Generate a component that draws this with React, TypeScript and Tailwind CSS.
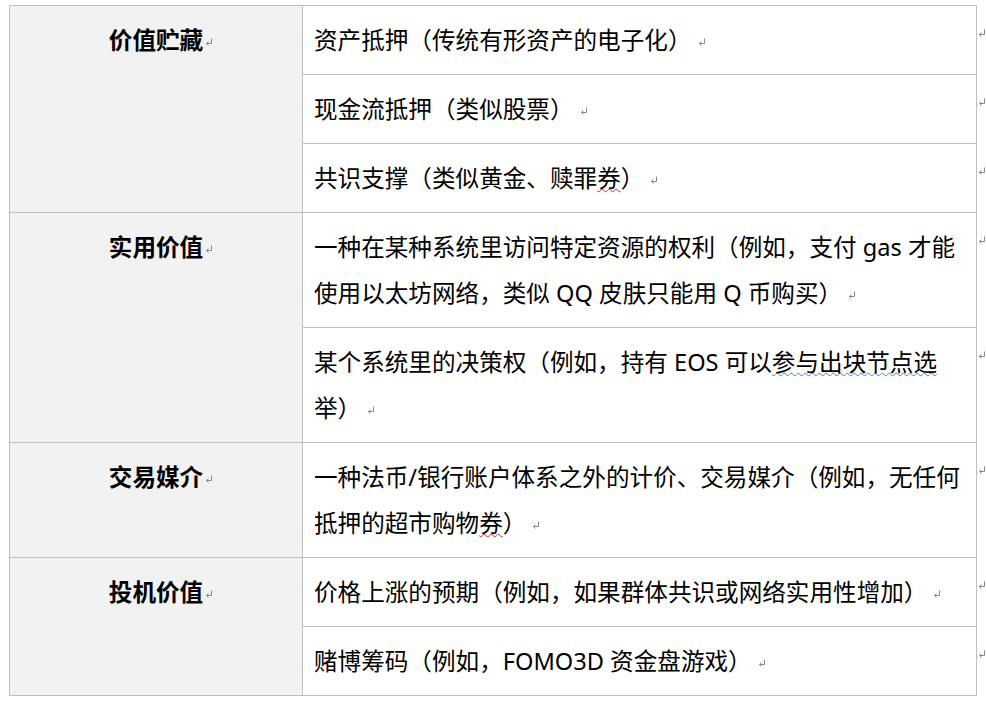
import type { ReactNode } from 'react';

type Group = {
  label: string;
  items: ReactNode[][];
};

function Wavy({ color, children }: { color: 'red' | 'blue'; children: ReactNode }) {
  return (
    <span
      className={
        color === 'red'
          ? 'underline decoration-wavy decoration-[#e3262b] decoration-1 underline-offset-[1px]'
          : 'underline decoration-wavy decoration-[#4a7fd8] decoration-1 underline-offset-[1px]'
      }
    >
      {children}
    </span>
  );
}

// Word-style paragraph mark
function ParaMark({ className = 'ml-[6px]' }: { className?: string }) {
  return (
    <svg
      className={`${className} inline-block align-[3px]`}
      width="8"
      height="8"
      viewBox="0 0 8 8"
      fill="none"
      stroke="#8a8a8a"
      strokeWidth="1"
    >
      <path d="M6.5 0.5V5.5H1.5" />
      <path d="M3.5 3.5L1.5 5.5L3.5 7.5" />
    </svg>
  );
}

const groups: Group[] = [
  {
    label: '价值贮藏',
    items: [
      ['资产抵押（传统有形资产的电子化）'],
      ['现金流抵押（类似股票）'],
      [
        <>
          共识支撑（类似黄金、赎罪<Wavy color="red">券</Wavy>）
        </>,
      ],
    ],
  },
  {
    label: '实用价值',
    items: [
      [
        '一种在某种系统里访问特定资源的权利（例如，支付 gas 才能',
        '使用以太坊网络，类似 QQ 皮肤只能用 Q 币购买）',
      ],
      [
        <>
          某个系统里的决策权（例如，持有 EOS 可以<Wavy color="blue">参与出块节点选</Wavy>
        </>,
        '举）',
      ],
    ],
  },
  {
    label: '交易媒介',
    items: [
      [
        '一种法币/银行账户体系之外的计价、交易媒介（例如，无任何',
        <>
          抵押的超市购物<Wavy color="red">券</Wavy>）
        </>,
      ],
    ],
  },
  {
    label: '投机价值',
    items: [
      ['价格上涨的预期（例如，如果群体共识或网络实用性增加）'],
      ['赌博筹码（例如，FOMO3D 资金盘游戏）'],
    ],
  },
];

export default function App() {
  return (
    <div
      className="min-h-[706px] w-[986px] overflow-hidden bg-white pl-[9px] pt-[5px] text-[23.6px] leading-[46px] text-black"
      style={{ fontFamily: '"Noto Sans", "Noto Sans CJK SC", sans-serif' }}
    >
      <table className="w-[976px] table-fixed border-collapse">
        <colgroup>
          <col className="w-[293px]" />
          <col className="w-[674px]" />
          <col className="w-[9px]" />
        </colgroup>
        <tbody>
          {groups.map((group) =>
            group.items.map((lines, i) => (
              <tr key={`${group.label}-${i}`}>
                {i === 0 && (
                  <td
                    rowSpan={group.items.length}
                    className="border border-[#bfbfbf] bg-[#f2f2f2] px-[11px] py-[11px] text-center align-top font-bold"
                  >
                    {group.label}
                    <ParaMark className="ml-[2px] mr-[-10px]" />
                  </td>
                )}
                <td className="whitespace-nowrap border border-[#bfbfbf] px-[11px] py-[11px] align-top">
                  {lines.map((line, j) => (
                    <div key={j}>
                      {line}
                      {j === lines.length - 1 && <ParaMark />}
                    </div>
                  ))}
                </td>
                <td className="overflow-visible pl-[1px] pt-[23px] align-top leading-none">
                  <svg width="8" height="8" viewBox="0 0 8 8" fill="none" stroke="#8a8a8a" strokeWidth="1">
                    <path d="M6.5 0.5V5.5H1.5" />
                    <path d="M3.5 3.5L1.5 5.5L3.5 7.5" />
                  </svg>
                </td>
              </tr>
            )),
          )}
        </tbody>
      </table>
    </div>
  );
}
